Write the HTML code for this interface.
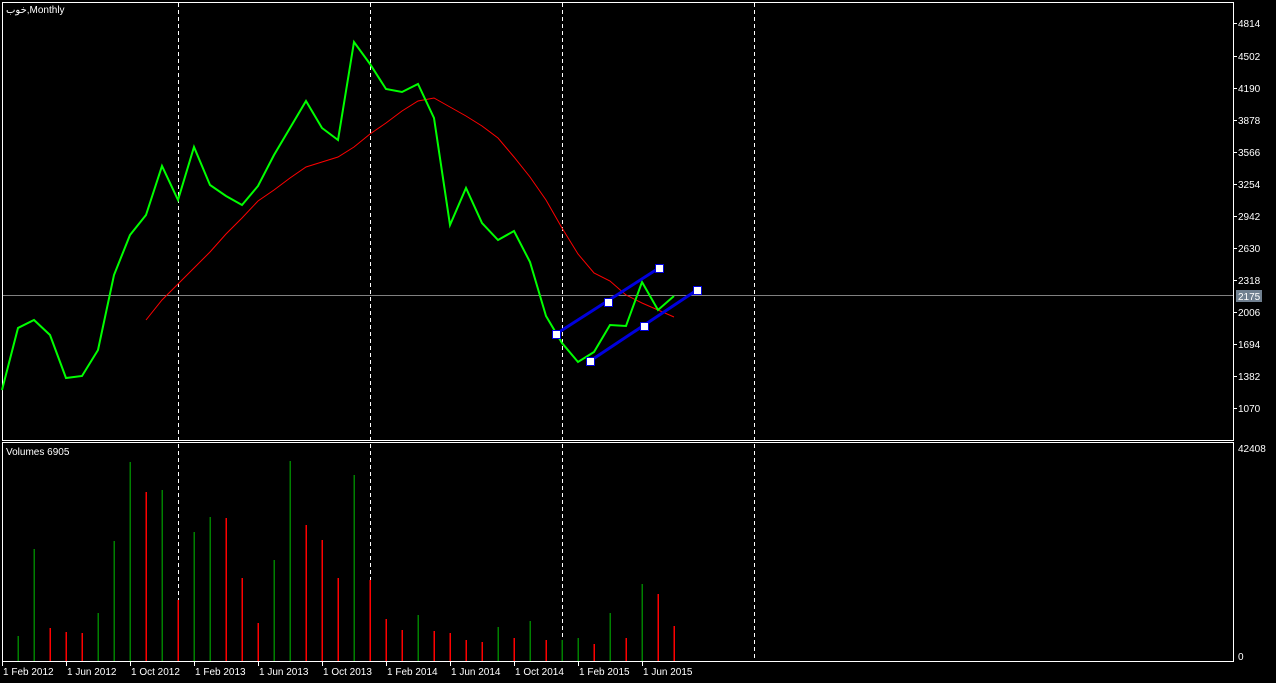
<!DOCTYPE html>
<html><head><style>
html,body{margin:0;padding:0;background:#000;width:1276px;height:683px;overflow:hidden}
svg{display:block}
text{font-family:"Liberation Sans","DejaVu Sans",sans-serif;font-size:10px;fill:#fff}
</style></head><body>
<svg width="1276" height="683" xmlns="http://www.w3.org/2000/svg">
<rect width="1276" height="683" fill="#000"/>
<!-- panel borders -->
<g stroke="#fff" stroke-width="1" fill="none" shape-rendering="crispEdges">
<path d="M2.5 2.5H1233.5V440.5H2.5Z"/>
<path d="M2.5 442.5H1233.5V661.5H2.5Z"/>
</g>
<!-- dashed verticals -->
<g stroke="#fff" stroke-dasharray="4,3" shape-rendering="crispEdges">
<line x1="178.5" y1="3" x2="178.5" y2="661"/>
<line x1="370.5" y1="3" x2="370.5" y2="661"/>
<line x1="562.5" y1="3" x2="562.5" y2="661"/>
<line x1="754.5" y1="3" x2="754.5" y2="661"/>
</g>
<!-- horizontal price line -->
<line x1="3" y1="295.5" x2="1233" y2="295.5" stroke="#808080" shape-rendering="crispEdges"/>
<!-- MA red -->
<polyline fill="none" stroke="#ff0000" stroke-width="1" points="146,320 162,300 178,284 194,268 210,252 226,234 242,218 258,201 274,190 290,178 306,167 322,162 338,157 354,147 370,134 386,123 402,111 418,101 434,98 450,107 466,116 482,126 498,138 514,157 530,177 546,200 562,228 578,254 594,273 610,281 626,295 642,303 658,310 674,317"/>
<!-- price green -->
<polyline fill="none" stroke="#00ff00" stroke-width="2" points="2,390 18,328 34,320 50,335 66,378 82,376 98,350 114,275 130,235 146,215 162,166 178,200 194,147 210,185 226,196 242,205 258,186 274,155 290,128 306,101 322,128 338,140 354,42 370,64 386,89 402,92 418,84 434,118 450,225 466,188 482,223 498,240 514,231 530,262 546,316 562,343 578,362 594,352 610,325 626,326 642,282 658,310 674,296"/>
<!-- blue channel -->
<g stroke="#0000dd" stroke-width="3">
<line x1="556" y1="334" x2="659" y2="268"/>
<line x1="590" y1="361" x2="697" y2="290"/>
</g>
<g fill="#fff" stroke="#0000dd" stroke-width="1">
<rect x="552.5" y="330.5" width="8" height="8"/>
<rect x="604.5" y="298.5" width="8" height="8"/>
<rect x="655.5" y="264.5" width="8" height="8"/>
<rect x="586.5" y="357.5" width="8" height="8"/>
<rect x="640.5" y="322.5" width="8" height="8"/>
<rect x="693.5" y="286.5" width="8" height="8"/>
</g>
<!-- volumes -->
<g stroke-width="1.5" shape-rendering="crispEdges">
<g stroke="#008000">
<line x1="18" y1="636" x2="18" y2="661"/><line x1="34" y1="549" x2="34" y2="661"/>
<line x1="98" y1="613" x2="98" y2="661"/><line x1="114" y1="541" x2="114" y2="661"/>
<line x1="130" y1="462" x2="130" y2="661"/><line x1="162" y1="490" x2="162" y2="661"/>
<line x1="194" y1="532" x2="194" y2="661"/><line x1="210" y1="517" x2="210" y2="661"/>
<line x1="274" y1="560" x2="274" y2="661"/><line x1="290" y1="461" x2="290" y2="661"/>
<line x1="354" y1="475" x2="354" y2="661"/><line x1="418" y1="615" x2="418" y2="661"/>
<line x1="498" y1="627" x2="498" y2="661"/><line x1="530" y1="621" x2="530" y2="661"/>
<line x1="562" y1="640" x2="562" y2="661"/><line x1="578" y1="638" x2="578" y2="661"/>
<line x1="610" y1="613" x2="610" y2="661"/><line x1="642" y1="584" x2="642" y2="661"/>
</g>
<g stroke="#ff0000">
<line x1="50" y1="628" x2="50" y2="661"/><line x1="66" y1="632" x2="66" y2="661"/>
<line x1="82" y1="633" x2="82" y2="661"/><line x1="146" y1="492" x2="146" y2="661"/>
<line x1="178" y1="600" x2="178" y2="661"/><line x1="226" y1="518" x2="226" y2="661"/>
<line x1="242" y1="578" x2="242" y2="661"/><line x1="258" y1="623" x2="258" y2="661"/>
<line x1="306" y1="525" x2="306" y2="661"/><line x1="322" y1="540" x2="322" y2="661"/>
<line x1="338" y1="578" x2="338" y2="661"/><line x1="370" y1="580" x2="370" y2="661"/>
<line x1="386" y1="619" x2="386" y2="661"/><line x1="402" y1="630" x2="402" y2="661"/>
<line x1="434" y1="631" x2="434" y2="661"/><line x1="450" y1="633" x2="450" y2="661"/>
<line x1="466" y1="640" x2="466" y2="661"/><line x1="482" y1="642" x2="482" y2="661"/>
<line x1="514" y1="638" x2="514" y2="661"/><line x1="546" y1="640" x2="546" y2="661"/>
<line x1="594" y1="644" x2="594" y2="661"/><line x1="626" y1="638" x2="626" y2="661"/>
<line x1="658" y1="594" x2="658" y2="661"/><line x1="674" y1="626" x2="674" y2="661"/>
</g>
</g>
<!-- price axis -->
<g stroke="#fff" shape-rendering="crispEdges">
<line x1="1233" y1="23.5" x2="1237" y2="23.5"/><line x1="1233" y1="56.5" x2="1237" y2="56.5"/>
<line x1="1233" y1="88.5" x2="1237" y2="88.5"/><line x1="1233" y1="120.5" x2="1237" y2="120.5"/>
<line x1="1233" y1="152.5" x2="1237" y2="152.5"/><line x1="1233" y1="184.5" x2="1237" y2="184.5"/>
<line x1="1233" y1="216.5" x2="1237" y2="216.5"/><line x1="1233" y1="248.5" x2="1237" y2="248.5"/>
<line x1="1233" y1="280.5" x2="1237" y2="280.5"/><line x1="1233" y1="312.5" x2="1237" y2="312.5"/>
<line x1="1233" y1="344.5" x2="1237" y2="344.5"/><line x1="1233" y1="376.5" x2="1237" y2="376.5"/>
<line x1="1233" y1="408.5" x2="1237" y2="408.5"/>
<line x1="2.5" y1="661" x2="2.5" y2="666"/><line x1="66.5" y1="661" x2="66.5" y2="666"/>
<line x1="130.5" y1="661" x2="130.5" y2="666"/><line x1="194.5" y1="661" x2="194.5" y2="666"/>
<line x1="258.5" y1="661" x2="258.5" y2="666"/><line x1="322.5" y1="661" x2="322.5" y2="666"/>
<line x1="386.5" y1="661" x2="386.5" y2="666"/><line x1="450.5" y1="661" x2="450.5" y2="666"/>
<line x1="514.5" y1="661" x2="514.5" y2="666"/><line x1="578.5" y1="661" x2="578.5" y2="666"/>
<line x1="642.5" y1="661" x2="642.5" y2="666"/>
</g>
<g>
<text x="1238" y="27">4814</text><text x="1238" y="60">4502</text><text x="1238" y="92">4190</text>
<text x="1238" y="124">3878</text><text x="1238" y="156">3566</text><text x="1238" y="188">3254</text>
<text x="1238" y="220">2942</text><text x="1238" y="252">2630</text><text x="1238" y="284">2318</text>
<text x="1238" y="316">2006</text><text x="1238" y="348">1694</text><text x="1238" y="380">1382</text>
<text x="1238" y="412">1070</text>
<text x="1238" y="452">42408</text><text x="1238" y="660">0</text>
</g>
<rect x="1236" y="290" width="26" height="12" fill="#708090"/>
<text x="1238" y="300">2175</text>
<text x="6" y="13">خوب,Monthly</text>
<text x="6" y="455">Volumes 6905</text>
<g>
<text x="3" y="675">1 Feb 2012</text><text x="67" y="675">1 Jun 2012</text>
<text x="131" y="675">1 Oct 2012</text><text x="195" y="675">1 Feb 2013</text>
<text x="259" y="675">1 Jun 2013</text><text x="323" y="675">1 Oct 2013</text>
<text x="387" y="675">1 Feb 2014</text><text x="451" y="675">1 Jun 2014</text>
<text x="515" y="675">1 Oct 2014</text><text x="579" y="675">1 Feb 2015</text>
<text x="643" y="675">1 Jun 2015</text>
</g>
</svg>
</body></html>
